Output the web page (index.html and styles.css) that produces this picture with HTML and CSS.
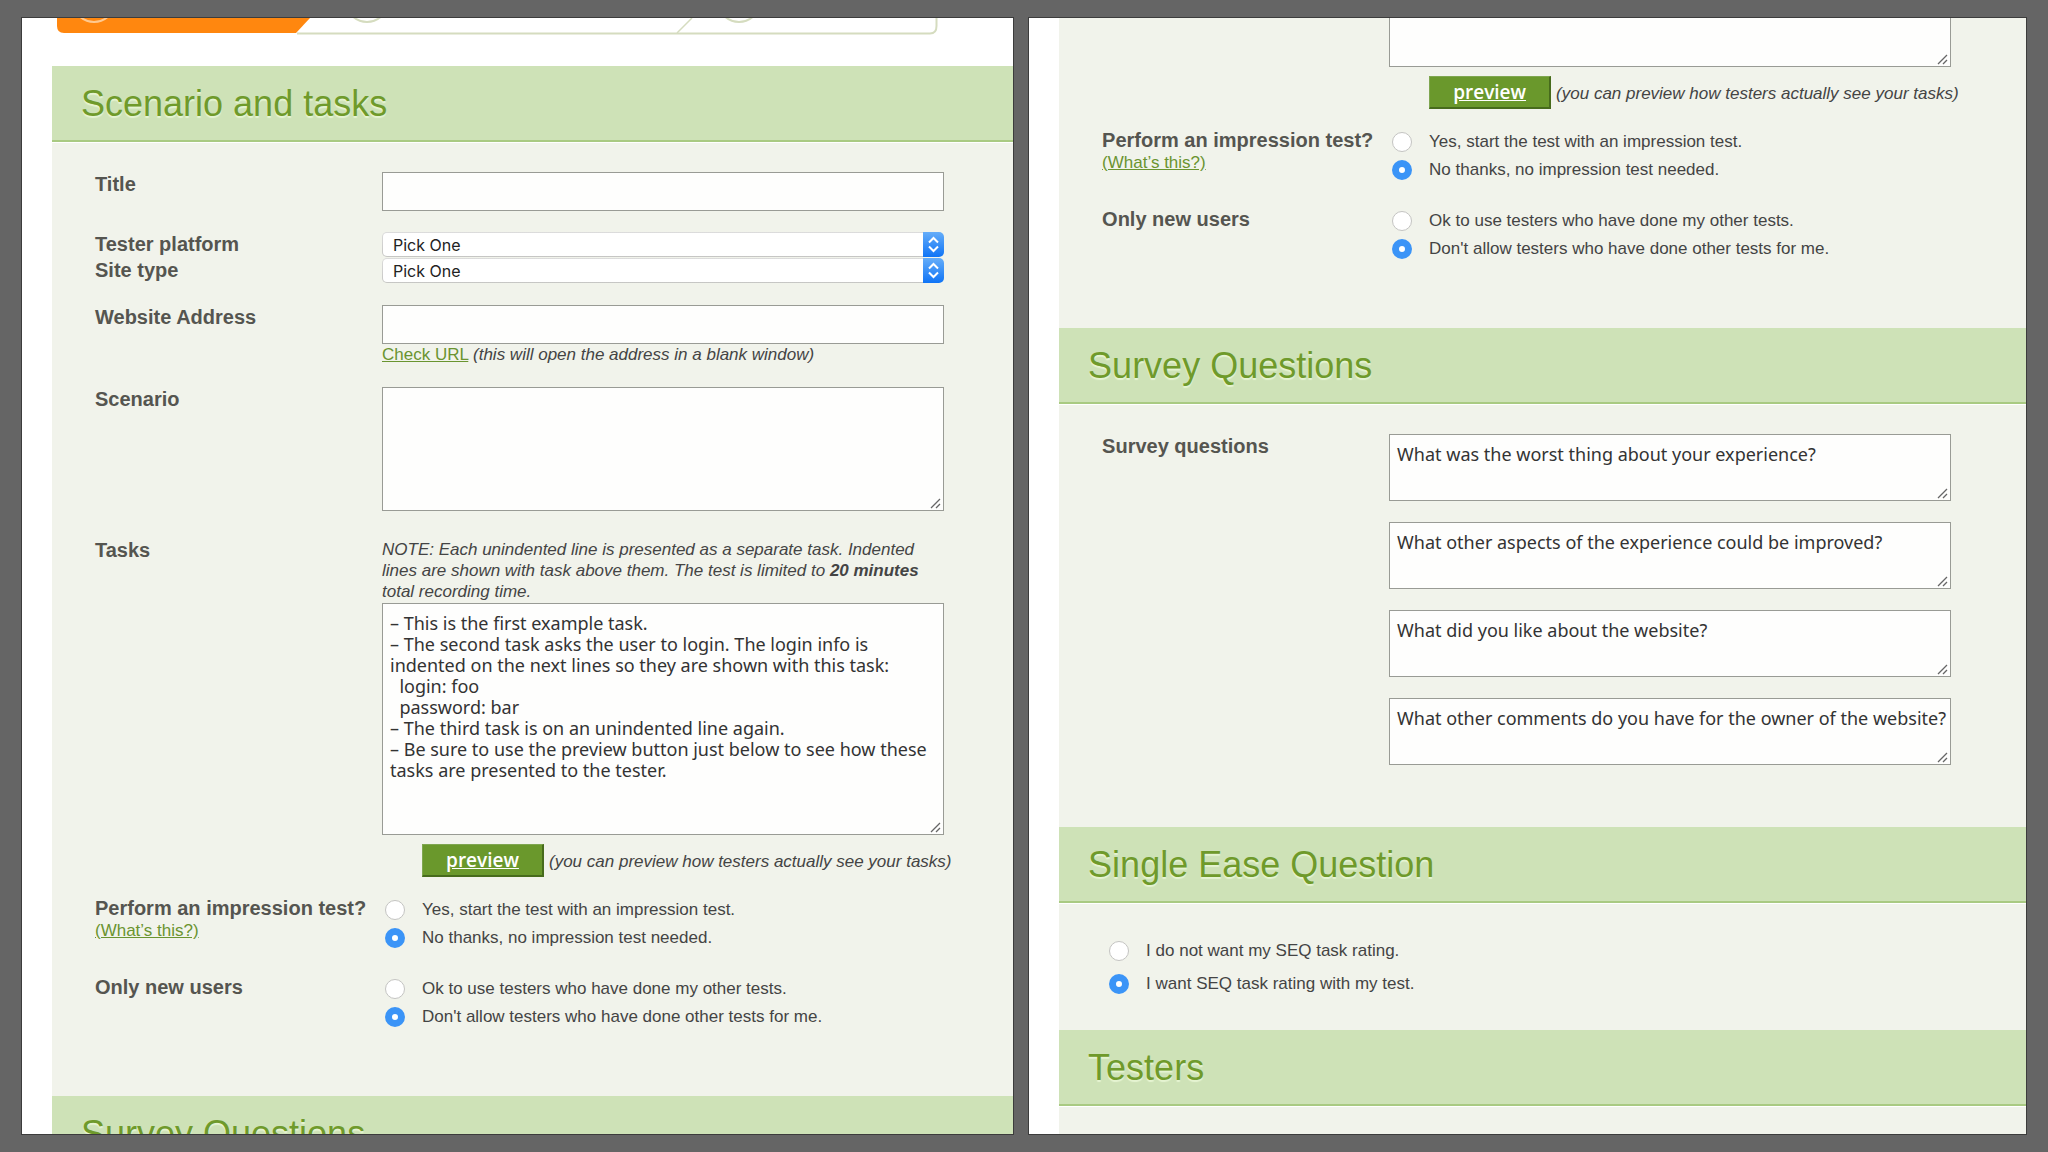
FILE: index.html
```
<!DOCTYPE html>
<html lang="en">
<head>
    <meta charset="utf-8">
    <title>Create a test</title>
    <link rel="stylesheet" href="styles.css">
</head>
<body>
<main class="panels">

    <!-- first part of the form -->
    <form class="panel panel-left">
        <svg class="steps" width="882" height="17" viewBox="0 0 882 17" aria-hidden="true">
            <path d="M240 15.5 H873 Q879.5 15.5 879.5 8 V0" fill="none" stroke="#d5dcbf" stroke-width="2"/>
            <path d="M620 15 L635 0" fill="none" stroke="#d5dcbf" stroke-width="1.5"/>
            <path d="M0 0 H253 L239 15 H7 Q0 15 0 8 Z" fill="#ff870f"/>
            <circle cx="37" cy="-17" r="21" fill="none" stroke="#ffc98f" stroke-width="2"/>
            <circle cx="310" cy="-17" r="21" fill="none" stroke="#d5dcbf" stroke-width="2"/>
            <circle cx="682" cy="-17" r="21" fill="none" stroke="#d5dcbf" stroke-width="2"/>
        </svg>

        <section class="section">
            <h2>Scenario and tasks</h2>
            <div class="fields">
                <div class="row row-title">
                    <label class="name" for="title">Title</label>
                    <input class="text" type="text" id="title">
                </div>
                <div class="row row-platform">
                    <label class="name" for="platform">Tester platform</label>
                    <select class="pick" id="platform"><option>Pick One</option></select>
                </div>
                <div class="row row-type">
                    <label class="name" for="site_type">Site type</label>
                    <select class="pick" id="site_type"><option>Pick One</option></select>
                </div>
                <div class="row row-address">
                    <label class="name" for="address">Website Address</label>
                    <div>
                        <input class="text" type="text" id="address">
                        <a href="#">Check URL</a> <em>(this will open the address in a blank window)</em>
                    </div>
                </div>
                <div class="row row-scenario">
                    <label class="name" for="scenario">Scenario</label>
                    <textarea class="area area-scenario" id="scenario"></textarea>
                </div>
                <div class="row row-tasks">
                    <label class="name" for="tasks">Tasks</label>
                    <div>
                        <p class="note">NOTE: Each unindented line is presented as a separate task. Indented lines are shown with task above them. The test is limited to <b>20 minutes</b> total recording time.</p>
                        <textarea class="area area-tasks" id="tasks">
– This is the first example task.
– The second task asks the user to login. The login info is indented on the next lines so they are shown with this task:
  login: foo
  password: bar
– The third task is on an unindented line again.
– Be sure to use the preview button just below to see how these tasks are presented to the tester.</textarea>
                        <div class="preview">
                            <button type="button">preview</button>
                            <em>(you can preview how testers actually see your tasks)</em>
                        </div>
                    </div>
                </div>
                <div class="row row-impression">
                    <div class="name">Perform an impression test?<br><a href="#">(What’s this?)</a></div>
                    <div class="choices">
                        <label><input type="radio" name="impression"> Yes, start the test with an impression test.</label>
                        <label><input type="radio" name="impression" checked> No thanks, no impression test needed.</label>
                    </div>
                </div>
                <div class="row">
                    <div class="name">Only new users</div>
                    <div class="choices">
                        <label><input type="radio" name="new_users"> Ok to use testers who have done my other tests.</label>
                        <label><input type="radio" name="new_users" checked> Don't allow testers who have done other tests for me.</label>
                    </div>
                </div>
            </div>
        </section>

        <section class="section">
            <h2>Survey Questions</h2>
        </section>
    </form>

    <!-- the same form, further down -->
    <form class="panel panel-right">
        <section class="section">
            <div class="fields fields-cut">
                <div class="row row-tasks">
                    <div></div>
                    <div>
                        <textarea class="area area-cut" aria-label="Tasks"></textarea>
                        <div class="preview">
                            <button type="button">preview</button>
                            <em>(you can preview how testers actually see your tasks)</em>
                        </div>
                    </div>
                </div>
                <div class="row row-impression">
                    <div class="name">Perform an impression test?<br><a href="#">(What’s this?)</a></div>
                    <div class="choices">
                        <label><input type="radio" name="impression"> Yes, start the test with an impression test.</label>
                        <label><input type="radio" name="impression" checked> No thanks, no impression test needed.</label>
                    </div>
                </div>
                <div class="row">
                    <div class="name">Only new users</div>
                    <div class="choices">
                        <label><input type="radio" name="new_users"> Ok to use testers who have done my other tests.</label>
                        <label><input type="radio" name="new_users" checked> Don't allow testers who have done other tests for me.</label>
                    </div>
                </div>
            </div>
        </section>

        <section class="section">
            <h2>Survey Questions</h2>
            <div class="fields fields-survey">
                <div class="row">
                    <label class="name" for="question1">Survey questions</label>
                    <div class="questions">
                        <textarea class="area area-question" id="question1">What was the worst thing about your experience?</textarea>
                        <textarea class="area area-question" aria-label="Question 2">What other aspects of the experience could be improved?</textarea>
                        <textarea class="area area-question" aria-label="Question 3">What did you like about the website?</textarea>
                        <textarea class="area area-question" aria-label="Question 4">What other comments do you have for the owner of the website?</textarea>
                    </div>
                </div>
            </div>
        </section>

        <section class="section">
            <h2>Single Ease Question</h2>
            <div class="choices seq">
                <label><input type="radio" name="seq"> I do not want my SEQ task rating.</label>
                <label><input type="radio" name="seq" checked> I want SEQ task rating with my test.</label>
            </div>
        </section>

        <section class="section section-last">
            <h2>Testers</h2>
        </section>
    </form>

</main>
</body>
</html>
```
FILE: styles.css
```
* {
    box-sizing: border-box;
}

body {
    margin: 0;
    background-color: #656565;
    color: #444;
    font: 17px/22px "Liberation Sans", Arial, sans-serif;
}

.panels {
    display: flex;
    gap: 14px;
    height: 100vh;
    padding: 17px 21px;
}

.panel {
    display: flex;
    flex-direction: column;
    min-width: 0;
    padding-left: 30px;
    border: 1px solid #3c3c3c;
    background-color: white;
    overflow: hidden;
}
.panel-left {
    flex: 993;
}
.panel-right {
    flex: 999;
}

.steps {
    flex: none;
    margin: 0 0 31px 5px;
}

.section {
    flex: none;
    background-color: #f1f3eb;
}
.section-last {
    flex: 1;
}

h2 {
    margin: 0;
    padding: 18px 29px 16px;
    border-bottom: 2px solid #a9ca82;
    box-shadow: 0 1px white;
    background-color: #cee2b7;
    color: #6f9a2b;
    font-size: 36px;
    font-weight: normal;
    line-height: 40px;
    text-shadow: 0 2px 1px #e6f4d2;
}

a {
    color: #6a9430;
}

/* label column and field column */
.fields {
    padding: 30px 0 65px 43px;
}
.fields-cut {
    padding-top: 0;
}
.fields-survey {
    padding-bottom: 62px;
}
.row {
    display: grid;
    grid-template-columns: 287px minmax(0, 562px);
}
.row-title,
.row-address {
    margin-bottom: 21px;
}
.row-platform {
    margin-bottom: 1px;
}
.row-type {
    margin-bottom: 22px;
}
.row-scenario {
    margin-bottom: 27px;
}
.row-tasks {
    margin-bottom: 19px;
}
.row-impression {
    margin-bottom: 23px;
}

.name {
    padding-top: 2px;
    color: #555550;
    font-size: 20px;
    font-weight: bold;
    line-height: 21px;
    white-space: nowrap;
}
.name a {
    font-size: 17px;
    font-weight: normal;
}

.text,
.area {
    display: block;
    width: 100%;
    border: 1px solid #999b95;
    background-color: #fefefd;
    color: #333;
    font: 18px/21px "Noto Sans", "Open Sans", sans-serif;
}
.text {
    height: 39px;
    padding: 0 7px;
}
.area {
    padding: 9px 2px 0 7px;
    resize: none;
    overflow: hidden;
    /* resize grip */
    background-image: url("data:image/svg+xml,%3Csvg xmlns='http://www.w3.org/2000/svg' width='12' height='12'%3E%3Cpath d='M1 10L10 1M6 10L10 6' stroke='%23666' stroke-width='1.3'/%3E%3C/svg%3E");
    background-repeat: no-repeat;
    background-position: right 1px bottom 0;
}
.area-scenario {
    height: 124px;
}
.area-tasks {
    height: 232px;
}
.area-cut {
    height: 49px;
    border-top: 0;
}
.area-question {
    height: 67px;
}
.questions {
    display: grid;
    gap: 21px;
}

.pick {
    appearance: none;
    width: 100%;
    height: 25px;
    padding: 0 28px 0 10px;
    border: 1px solid transparent;
    border-radius: 5px;
    background:
        url("data:image/svg+xml,%3Csvg xmlns='http://www.w3.org/2000/svg' width='21' height='25'%3E%3Cdefs%3E%3ClinearGradient id='g' x2='0' y2='1'%3E%3Cstop stop-color='%2365adf9'/%3E%3Cstop offset='1' stop-color='%230f74f6'/%3E%3C/linearGradient%3E%3C/defs%3E%3Cpath d='M0 0H21V25H0Z' fill='url(%23g)'/%3E%3Cpath d='M6 10.5L10.5 6L15 10.5M6 14.5L10.5 19L15 14.5' fill='none' stroke='white' stroke-width='2'/%3E%3C/svg%3E") right / 21px 25px no-repeat border-box,
        linear-gradient(white, white) padding-box,
        linear-gradient(#dcdcdc, #c6c6c4) border-box;
    color: #222;
    font: 16px/20px Inter, Roboto, sans-serif;
}

.note {
    margin: 1px 0;
    font-style: italic;
    line-height: 21px;
}

.preview {
    display: flex;
    align-items: center;
    gap: 5px;
    margin: 9px 0 0 40px;
    white-space: nowrap;
}
.preview em {
    padding-top: 3px;
}
.preview button {
    flex: none;
    width: 122px;
    height: 33px;
    padding: 0;
    border: 1px solid #7fa650;
    border-right: 2px solid #476b1c;
    border-bottom: 2px solid #476b1c;
    background-color: #6a982c;
    color: white;
    font: 600 19px/22px "Open Sans", sans-serif;
    text-decoration: underline;
}

.choices label {
    display: flex;
    align-items: center;
    gap: 17px;
    height: 28px;
    padding-left: 3px;
}
.choices input {
    appearance: none;
    width: 20px;
    height: 20px;
    margin: 0;
    border: 1px solid #c4c4c2;
    border-radius: 50%;
    background-color: white;
}
.choices input:checked {
    border: 7px solid #3b94f7;
}

.seq {
    padding: 31px 0 30px 47px;
}
.seq label {
    height: 33px;
}
```
